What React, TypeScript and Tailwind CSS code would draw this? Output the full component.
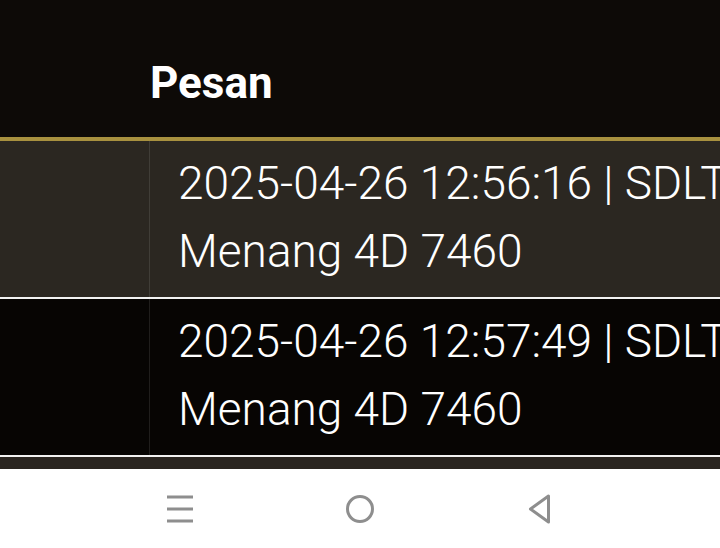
export default function App() {
  const rows = [
    { time: "2025-04-26 12:56:16 | SDLT", msg: "Menang 4D 7460", bg: "bg-[#2b2721]" },
    { time: "2025-04-26 12:57:49 | SDLT", msg: "Menang 4D 7460", bg: "bg-[#070503]" },
  ];
  return (
    <div
      className="w-[720px] h-[548px] overflow-hidden flex flex-col bg-[#0c0906]"
      style={{ fontFamily: "Roboto, 'Liberation Sans', sans-serif" }}
    >
      <div className="flex-1 flex flex-col overflow-hidden">
        <div className="h-[137px] flex shrink-0 bg-[#0d0a07]">
          <div className="w-[150px] shrink-0" />
          <div className="pt-[57px] text-[44px] leading-[52px] font-bold text-white">Pesan</div>
        </div>
        <div className="h-[4px] bg-[#a8913f] shrink-0" />
        {rows.map((r, i) => (
          <div key={i} className={`flex shrink-0 border-b-2 border-[#f2f2f2] ${r.bg}`}>
            <div className="w-[150px] shrink-0 border-r border-white/10" />
            <div className="pl-[28px] pt-[8px] pb-[12px] text-[46px] leading-[68px] font-light text-white whitespace-nowrap overflow-hidden">
              <div>{r.time}</div>
              <div>{r.msg}</div>
            </div>
          </div>
        ))}
        <div className="flex-1 bg-[#2a2520]" />
      </div>
      <div className="h-[79px] shrink-0 bg-white flex items-center justify-center">
        <div className="w-[180px] flex justify-center">
          <svg width="26" height="28" viewBox="0 0 26 28">
            <rect x="0" y="0.5" width="26" height="3" fill="#8e8e8e" />
            <rect x="0" y="12.5" width="26" height="3" fill="#8e8e8e" />
            <rect x="0" y="24.5" width="26" height="3" fill="#8e8e8e" />
          </svg>
        </div>
        <div className="w-[180px] flex justify-center">
          <svg width="30" height="30" viewBox="0 0 30 30">
            <circle cx="15" cy="15" r="12.5" fill="none" stroke="#8e8e8e" strokeWidth="3" />
          </svg>
        </div>
        <div className="w-[180px] flex justify-center">
          <svg width="26" height="32" viewBox="0 0 26 32">
            <path d="M21.5 3 L3.5 16 L21.5 29 Z" fill="none" stroke="#8e8e8e" strokeWidth="3" strokeLinejoin="round" />
          </svg>
        </div>
      </div>
    </div>
  );
}
